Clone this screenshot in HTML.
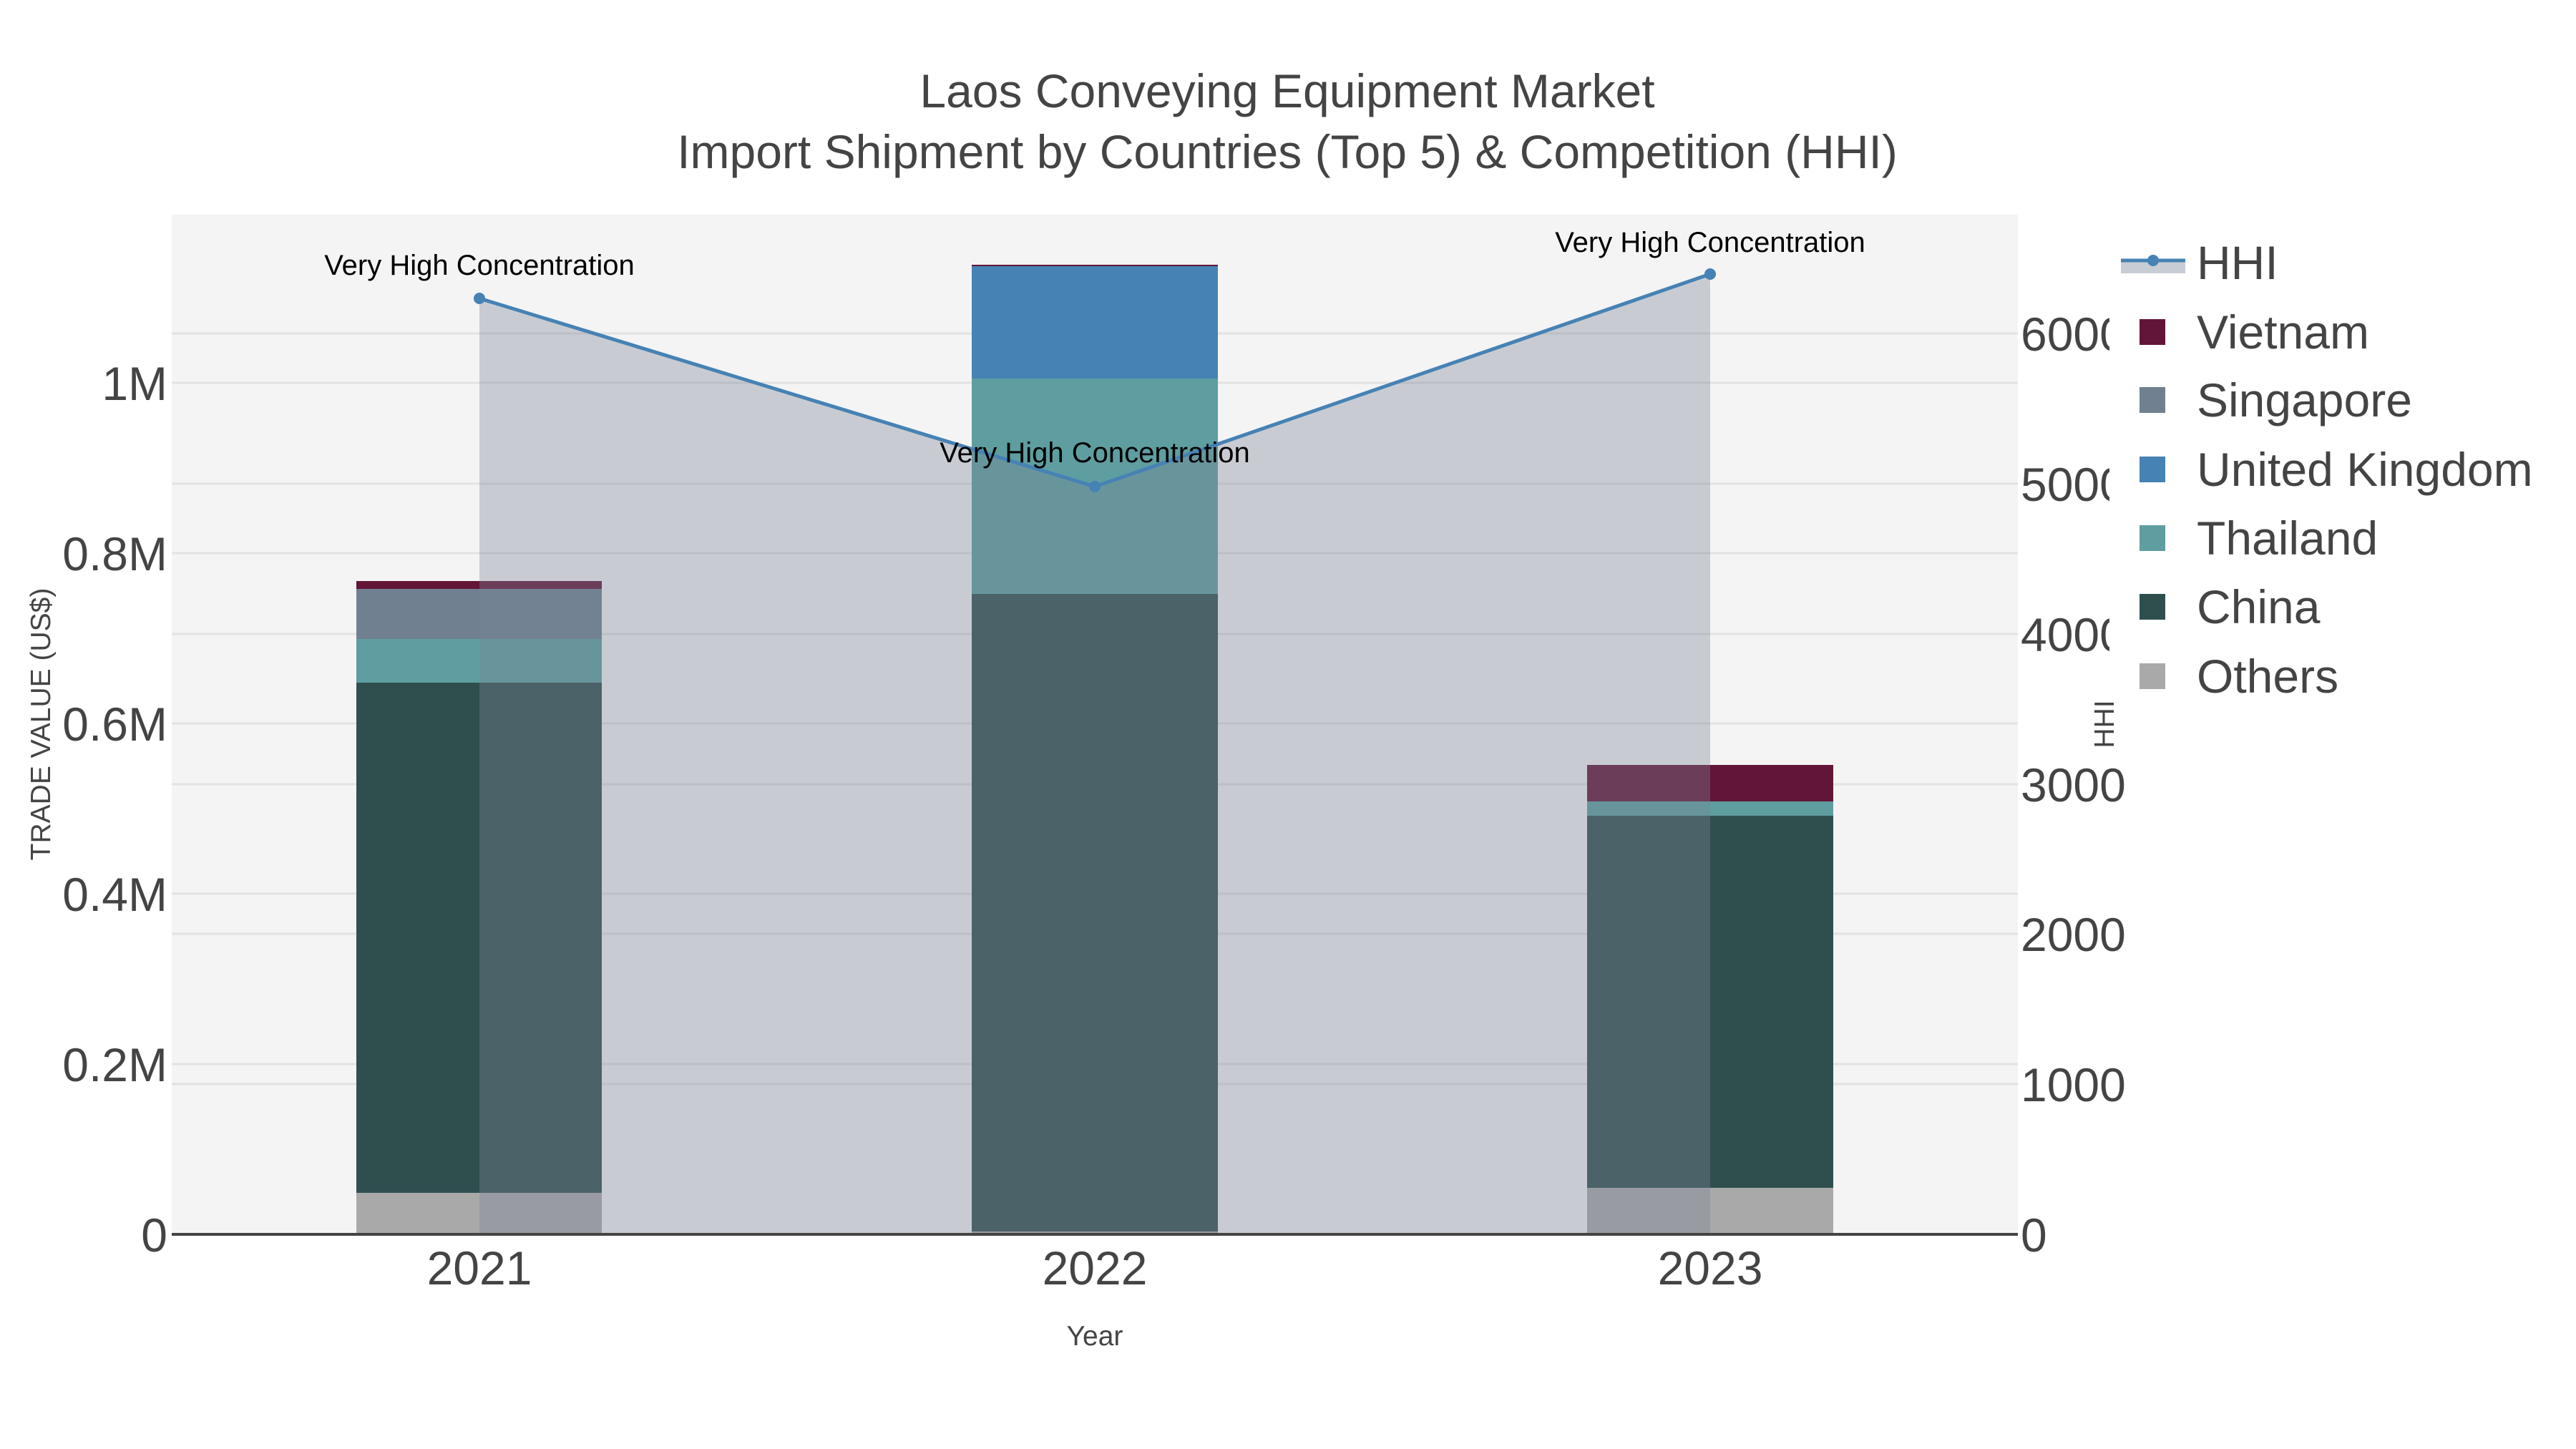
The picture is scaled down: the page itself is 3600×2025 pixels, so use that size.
<!DOCTYPE html>
<html><head><meta charset="utf-8"><style>
html,body{margin:0;padding:0;background:#fff;}
svg{display:block;font-family:"Liberation Sans",Arial,sans-serif;}
</style></head><body>
<svg width="3600" height="2025" viewBox="0 0 3600 2025" xmlns="http://www.w3.org/2000/svg">
<rect x="0" y="0" width="3600" height="2025" fill="#fff"/>
<rect x="240" y="300" width="2580" height="1425" fill="#f4f4f4"/>
<g stroke="#e2e2e2" stroke-width="3">
<line x1="240" y1="1487" x2="2820" y2="1487"/>
<line x1="240" y1="1249" x2="2820" y2="1249"/>
<line x1="240" y1="1011" x2="2820" y2="1011"/>
<line x1="240" y1="773" x2="2820" y2="773"/>
<line x1="240" y1="535" x2="2820" y2="535"/>
<line x1="240" y1="1515" x2="2820" y2="1515"/>
<line x1="240" y1="1305" x2="2820" y2="1305"/>
<line x1="240" y1="1096" x2="2820" y2="1096"/>
<line x1="240" y1="886" x2="2820" y2="886"/>
<line x1="240" y1="676" x2="2820" y2="676"/>
<line x1="240" y1="466" x2="2820" y2="466"/>
</g>
<!-- 2021 bar -->
<rect x="498" y="1667" width="343" height="58" fill="#a9a9a9"/>
<rect x="498" y="954" width="343" height="713" fill="#2f4f4f"/>
<rect x="498" y="893" width="343" height="61" fill="#5f9ea0"/>
<rect x="498" y="823" width="343" height="70" fill="#708090"/>
<rect x="498" y="812" width="343" height="11" fill="#631538"/>
<!-- 2022 bar -->
<rect x="1358" y="1721" width="344" height="4" fill="#a9a9a9"/>
<rect x="1358" y="830" width="344" height="891" fill="#2f4f4f"/>
<rect x="1358" y="529" width="344" height="301" fill="#5f9ea0"/>
<rect x="1358" y="372" width="344" height="157" fill="#4682b4"/>
<rect x="1358" y="370" width="344" height="2" fill="#631538"/>
<!-- 2023 bar -->
<rect x="2218" y="1660" width="344" height="65" fill="#a9a9a9"/>
<rect x="2218" y="1140" width="344" height="520" fill="#2f4f4f"/>
<rect x="2218" y="1120" width="344" height="20" fill="#5f9ea0"/>
<rect x="2218" y="1069" width="344" height="51" fill="#631538"/>
<!-- HHI area -->
<polygon points="670,417 1530,680 2390,383 2390,1725 670,1725" fill="rgba(122,134,150,0.36)"/>
<polyline points="670,417 1530,680 2390,383" fill="none" stroke="#4682b4" stroke-width="5"/>
<circle cx="670" cy="417" r="8" fill="#4682b4"/>
<circle cx="1530" cy="680" r="8" fill="#4682b4"/>
<circle cx="2390" cy="383" r="8" fill="#4682b4"/>
<line x1="240" y1="1725" x2="2820" y2="1725" stroke="#444" stroke-width="4"/>
<!-- annotations -->
<g font-size="40" fill="#000" text-anchor="middle">
<text x="670" y="384">Very High Concentration</text>
<text x="1530" y="646">Very High Concentration</text>
<text x="2390" y="352">Very High Concentration</text>
</g>
<!-- title -->
<g font-size="66" fill="#444" text-anchor="middle">
<text x="1799" y="150">Laos Conveying Equipment Market</text>
<text x="1799" y="235">Import Shipment by Countries (Top 5) &amp; Competition (HHI)</text>
</g>
<!-- left ticks -->
<g font-size="66" fill="#444" text-anchor="end">
<text x="234" y="1749">0</text>
<text x="234" y="1511">0.2M</text>
<text x="234" y="1273">0.4M</text>
<text x="234" y="1035">0.6M</text>
<text x="234" y="797">0.8M</text>
<text x="234" y="559">1M</text>
</g>
<!-- right ticks -->
<g font-size="66" fill="#444">
<text x="2824" y="1749">0</text>
<text x="2824" y="1539">1000</text>
<text x="2824" y="1329">2000</text>
<text x="2824" y="1120">3000</text>
<text x="2824" y="910">4000</text>
<text x="2824" y="700">5000</text>
<text x="2824" y="490">6000</text>
</g>
<!-- x ticks -->
<g font-size="66" fill="#444" text-anchor="middle">
<text x="670" y="1795">2021</text>
<text x="1530" y="1795">2022</text>
<text x="2390" y="1795">2023</text>
</g>
<text x="1530" y="1880" font-size="39" fill="#444" text-anchor="middle">Year</text>
<text transform="translate(70,1012) rotate(-90)" font-size="39" fill="#444" text-anchor="middle">TRADE VALUE (US$)</text>
<text transform="translate(2954,1012) rotate(-90)" font-size="39" fill="#444" text-anchor="middle">HHI</text>
<!-- legend -->
<rect x="2948" y="300" width="652" height="675" fill="#fff"/>
<rect x="2964" y="364" width="90" height="18" fill="#c8ccd4"/>
<line x1="2964" y1="364" x2="3054" y2="364" stroke="#4682b4" stroke-width="5"/>
<circle cx="3009" cy="364" r="8" fill="#4682b4"/>
<rect x="2990" y="446" width="36" height="36" fill="#631538"/>
<rect x="2990" y="541" width="36" height="36" fill="#708090"/>
<rect x="2990" y="638" width="36" height="36" fill="#4682b4"/>
<rect x="2990" y="734" width="36" height="36" fill="#5f9ea0"/>
<rect x="2990" y="830" width="36" height="36" fill="#2f4f4f"/>
<rect x="2990" y="927" width="36" height="36" fill="#a9a9a9"/>
<g font-size="66" fill="#444">
<text x="3070" y="390">HHI</text>
<text x="3070" y="487">Vietnam</text>
<text x="3070" y="582">Singapore</text>
<text x="3070" y="679">United Kingdom</text>
<text x="3070" y="775">Thailand</text>
<text x="3070" y="871">China</text>
<text x="3070" y="968">Others</text>
</g>
</svg>
</body></html>
